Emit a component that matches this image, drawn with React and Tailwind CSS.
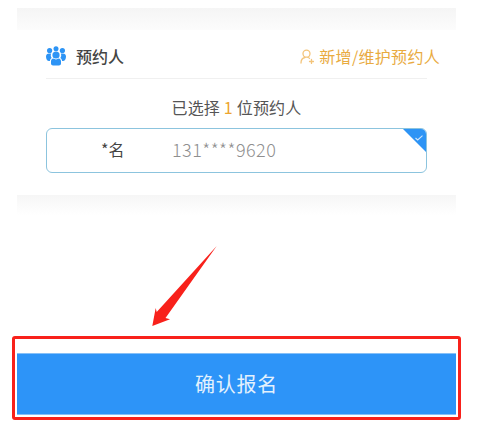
const font = "font-['Noto_Sans_CJK_SC','Noto_Sans',sans-serif]";

function GroupIcon() {
  return (
    <svg width="20" height="20" viewBox="0 0 20 20" fill="#2d94f5" className="shrink-0">
      <circle cx="3.600" cy="4.500" r="2.600" />
      <circle cx="16.400" cy="4.500" r="2.600" />
      <circle cx="10" cy="2.800" r="2.500" />
      <path d="M0 10.500c0-2 1.400-3 3-3h2.200c-.7 1.500-.6 3.300.5 4.600-1.100.7-1.700 1.700-1.800 2.900h-.9C1.200 15 0 13 0 10.500z" />
      <path d="M20 10.500c0-2-1.400-3-3-3h-2.200c.7 1.500.6 3.300-.5 4.600 1.100.7 1.700 1.700 1.800 2.900h.9c1.800 0 3-2 3-4.500z" />
      <circle cx="10" cy="9" r="3.600" />
      <path d="M5 15.500c0-1.500.9-2.600 2.200-2.900.8.500 1.800.8 2.800.8s2-.3 2.800-.8c1.300.3 2.200 1.400 2.200 2.900v2c0 1-.9 2-2 2H7c-1.100 0-2-1-2-2z" />
    </svg>
  );
}

function AddUserIcon() {
  return (
    <svg width="14" height="15" viewBox="0 0 14 15" fill="none" stroke="#f3c47a" strokeWidth="1.300" strokeLinecap="round" className="shrink-0">
      <circle cx="6.500" cy="4.700" r="3.500" />
      <path d="M1 14c0-3 1.700-5 4-5.500M8 8.500c.6.200 1 .4 1.500.8" />
      <path d="M9.500 12.500h4M11.500 10.500v4" />
    </svg>
  );
}

export default function App() {
  return (
    <div className={`relative flex h-[426px] w-[478px] flex-col overflow-hidden bg-white ${font}`}>
      <div className="mr-[22px] ml-[17px] mt-[8px] h-[22px] bg-gradient-to-b from-[#f5f5f5] to-[#fcfcfc]" />

      <section className="mr-[22px] ml-[17px] h-[165px] bg-white pr-[29px] pl-[29px]">
        <header className="flex h-[49px] items-center justify-between border-b border-[#f0f0f0] pt-[4px]">
          <div className="flex items-center gap-[10px]">
            <GroupIcon />
            <span className="text-[16px] leading-none font-medium text-[#444444]">预约人</span>
          </div>
          <div className="-mr-[13px] flex items-center gap-[5px]">
            <AddUserIcon />
            <span className="text-[16px] tracking-[0.3px] leading-none text-[#e9ab3f]">新增/维护预约人</span>
          </div>
        </header>

        <p className="mt-[18px] text-center text-[16px] tracking-[0.2px] leading-[20px] text-[#555555]">
          已选择 <span className="text-[#eda52e]">1</span> 位预约人
        </p>

        <div className="relative mt-[11px] flex h-[45px] items-center overflow-hidden rounded-[6px] border border-[#8cc4de] bg-white pb-[3px]">
          <span className="ml-[54px] w-[71px] text-[16px] leading-none text-[#444444]">*名</span>
          <span className="text-[18px] tracking-[0.45px] leading-none font-light text-[#8f8f8f]">131****9620</span>
          <div className="absolute top-0 right-0 h-0 w-0 border-t-[23px] border-l-[23px] border-t-[#2d94f5] border-l-transparent" />
          <svg width="8" height="6" viewBox="0 0 8 6" fill="none" stroke="#cfe5fb" strokeWidth="1.100" className="absolute top-[6px] right-[3px]">
            <path d="M0.500 3l2.200 2L7.500 0.700" />
          </svg>
        </div>
      </section>

      <div className="mr-[22px] ml-[17px] h-[20px] bg-gradient-to-b from-[#f6f6f6] to-white" />

      <div className="mr-[17px] ml-[12px] mt-[121px] h-[84px] rounded-[3px] border-[3px] border-[#f8211b] px-[2px] pt-[14px]">
        <button className="flex h-[62px] w-full items-center justify-center border-y border-[#86c0f8] bg-[#2d94f8] text-[20px] tracking-[0.8px] text-[#e3f1fd]">
          确认报名
        </button>
      </div>

      <svg width="70" height="86" viewBox="0 0 70 86" className="absolute top-[244px] left-[150px]">
        <path d="M66.700 2 L15.500 74 L20 75.300 L2.300 82 L5.700 64 L6.700 68 Z" fill="#f8211b" />
      </svg>
    </div>
  );
}
